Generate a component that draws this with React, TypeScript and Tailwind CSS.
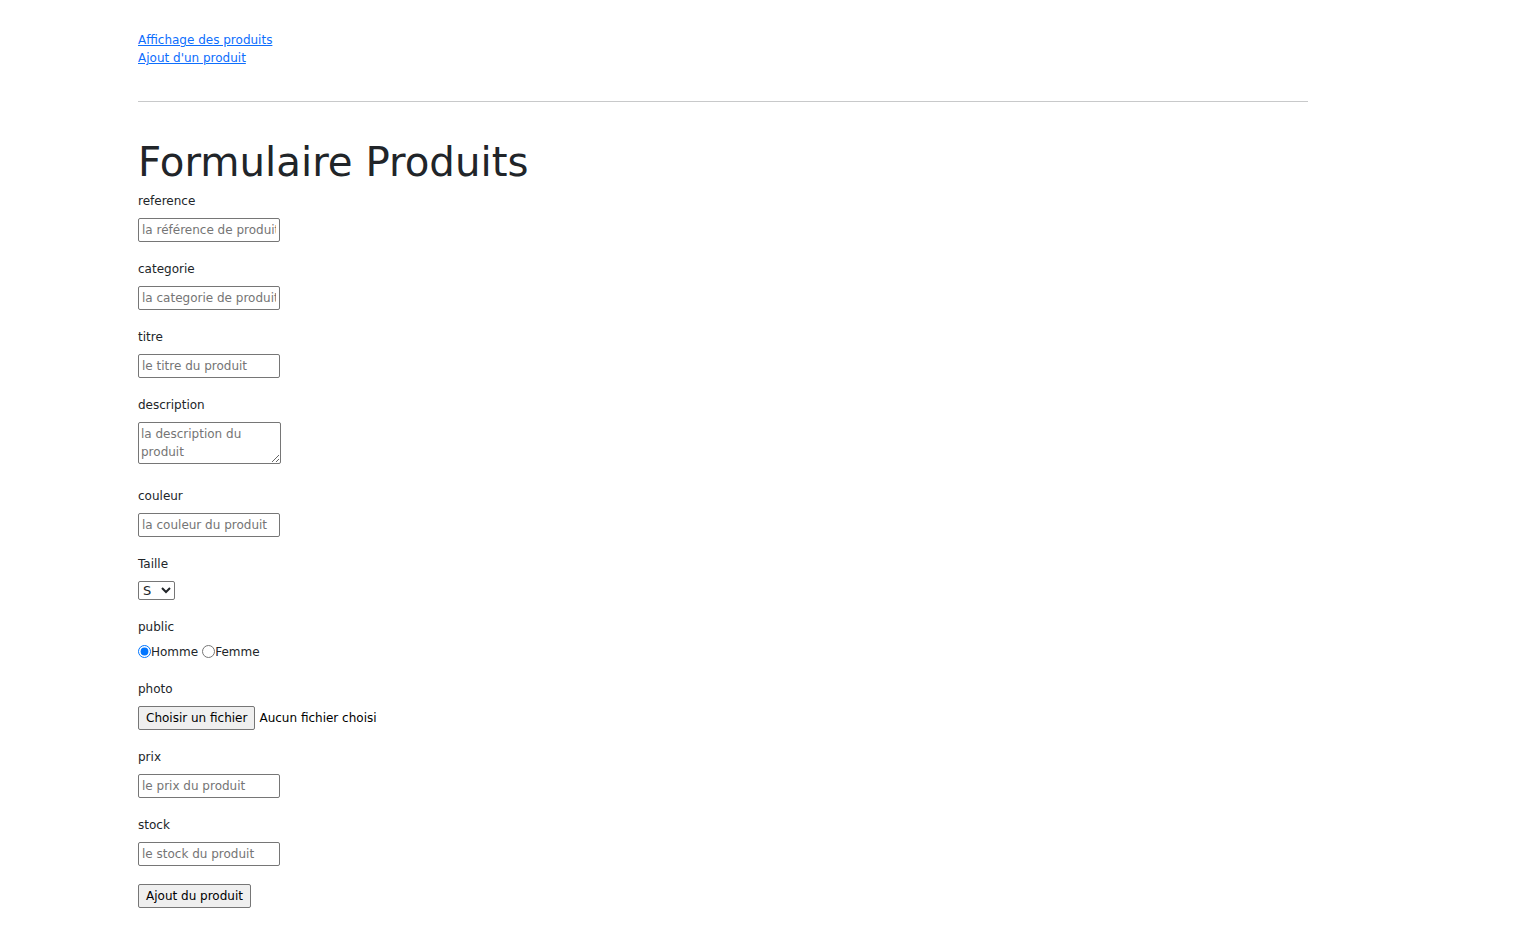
import React from "react";

const inputCls =
  "block w-[142px] h-[24px] border border-[#767676] rounded-[2px] px-[3px] text-[12px] leading-[18px] text-[#212529] bg-white placeholder:text-[#757575] outline-none";

function Label({ children, className = "" }: { children: React.ReactNode; className?: string }) {
  return <label className={"block h-[18px] leading-[18px] " + className}>{children}</label>;
}

export default function App() {
  return (
    <div className="min-h-screen bg-white pl-[138px] pt-[31px] text-[12px] leading-[18px] text-[#212529] font-['DejaVu_Sans',sans-serif]">
      <div className="flex flex-col items-start">
        <a href="#" className="text-[#0d6efd] underline">
          Affichage des produits
        </a>
        <a href="#" className="text-[#0d6efd] underline">
          Ajout d'un produit
        </a>
      </div>
      <hr className="mt-[34px] w-[1170px] border-0 border-t border-[#c8c9ca]" />
      <h1 className="mt-[37px] text-[40.3px] leading-[48px] font-normal text-[#212529]">Formulaire Produits</h1>

      <div className="flex flex-col items-start">
        <Label className="mt-[5px]">reference</Label>
        <input className={inputCls + " mt-[8px]"} placeholder="la référence de produit" />

        <Label className="mt-[18px]">categorie</Label>
        <input className={inputCls + " mt-[8px]"} placeholder="la categorie de produit" />

        <Label className="mt-[18px]">titre</Label>
        <input className={inputCls + " mt-[8px]"} placeholder="le titre du produit" />

        <Label className="mt-[18px]">description</Label>
        <textarea
          className="block mt-[8px] w-[143px] h-[42px] border border-[#767676] rounded-[2px] px-[2px] pt-[2px] pb-0 text-[12px] leading-[18px] bg-white placeholder:text-[#757575] outline-none"
          placeholder="la description du produit"
        />

        <Label className="mt-[23px]">couleur</Label>
        <input className={inputCls + " mt-[8px]"} placeholder="la couleur du produit" />

        <Label className="mt-[18px]">Taille</Label>
        <select className="block mt-[8px] w-[37px] h-[19px] border border-[#767676] rounded-[2px] text-[13px] leading-[17px] bg-white pl-0">
          <option>S</option>
          <option>M</option>
          <option>L</option>
          <option>XL</option>
        </select>

        <Label className="mt-[18px]">public</Label>
        <div className="mt-[7px] flex items-center h-[18px]">
          <input type="radio" name="public" defaultChecked className="m-0 -mt-[2px] w-[13px] h-[13px] accent-[#0075ff]" />
          <span>Homme</span>
          <span className="w-[4px]" />
          <input type="radio" name="public" className="m-0 -mt-[2px] w-[13px] h-[13px]" />
          <span>Femme</span>
        </div>

        <Label className="mt-[19px]">photo</Label>
        <div className="mt-[8px] flex items-center h-[24px]">
          <button className="h-[24px] px-[7px] bg-[#efefef] border border-[#767676] rounded-[2px] text-[12px] text-black">
            Choisir un fichier
          </button>
          <span className="ml-[4px] text-black">Aucun fichier choisi</span>
        </div>

        <Label className="mt-[18px]">prix</Label>
        <input className={inputCls + " mt-[8px]"} placeholder="le prix du produit" />

        <Label className="mt-[18px]">stock</Label>
        <input className={inputCls + " mt-[8px]"} placeholder="le stock du produit" />

        <button className="mt-[18px] h-[24px] px-[7px] bg-[#efefef] border border-[#767676] rounded-[2px] text-[12px] text-black">
          Ajout du produit
        </button>
      </div>
    </div>
  );
}
